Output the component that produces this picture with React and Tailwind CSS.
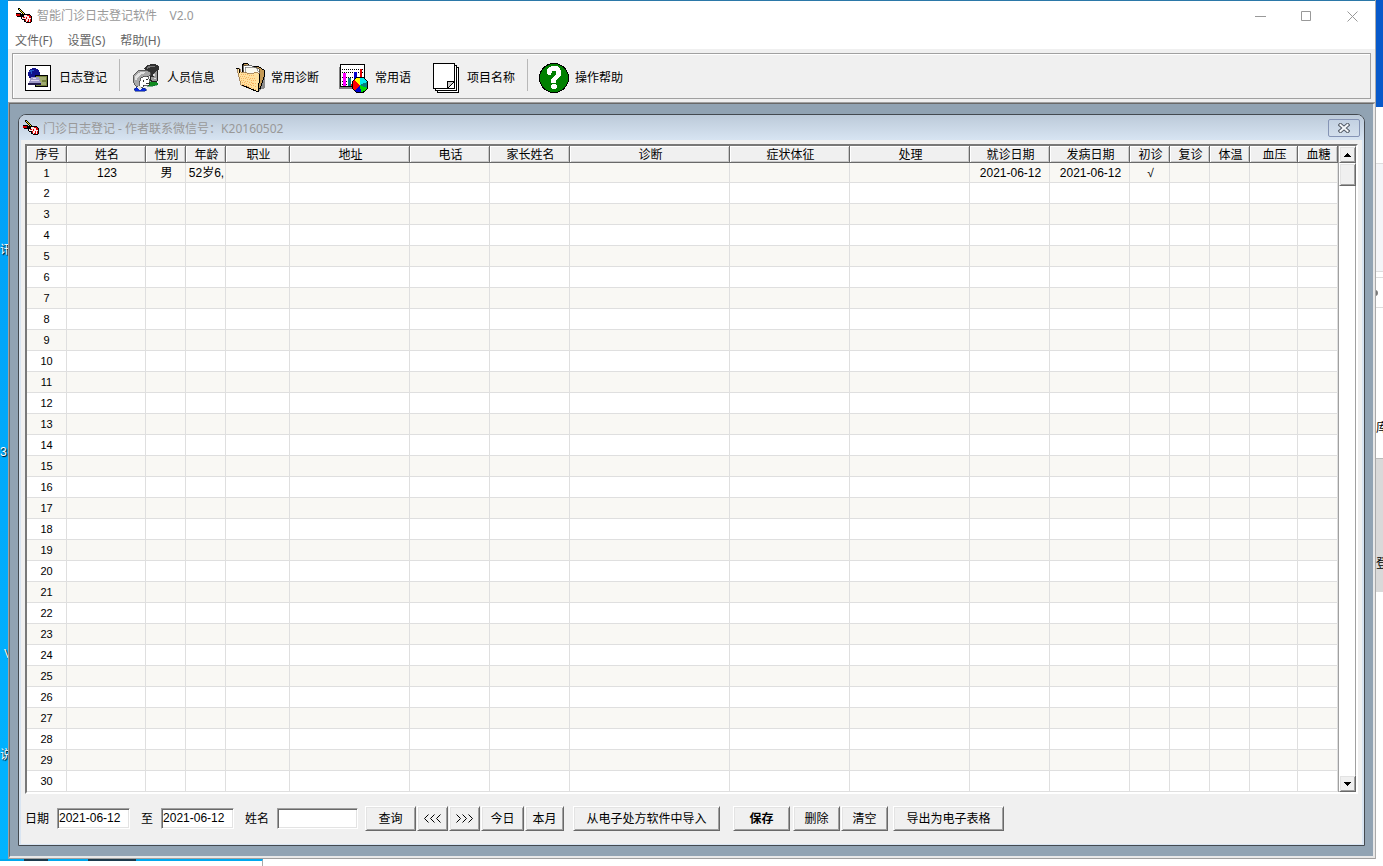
const COLUMNS = [
  { title: '序号', width: 40 },
  { title: '姓名', width: 79 },
  { title: '性别', width: 40 },
  { title: '年龄', width: 40 },
  { title: '职业', width: 64 },
  { title: '地址', width: 120 },
  { title: '电话', width: 80 },
  { title: '家长姓名', width: 80 },
  { title: '诊断', width: 160 },
  { title: '症状体征', width: 120 },
  { title: '处理', width: 120 },
  { title: '就诊日期', width: 80 },
  { title: '发病日期', width: 80 },
  { title: '初诊', width: 40 },
  { title: '复诊', width: 40 },
  { title: '体温', width: 40 },
  { title: '血压', width: 48 },
  { title: '血糖', width: 40 },
]

const RECORDS = [
  { 姓名: '123', 性别: '男', 年龄: '52岁6,', 就诊日期: '2021-06-12', 发病日期: '2021-06-12', 初诊: '√' },
]

const ROWS = Array.from({ length: 30 }, (_, i) => RECORDS[i] || {})

const RAISED =
  'border border-t-white border-l-white border-r-[#696969] border-b-[#696969] bg-[#f0f0f0] shadow-[inset_1px_1px_0_#e3e3e3,inset_-1px_-1px_0_#a0a0a0]'

function AppIcon() {
  return (
    <svg width="16" height="16" viewBox="0 0 16 16" shapeRendering="crispEdges" aria-hidden="true">
      <path d="M2 0h2v1h1v1h1v1h1v1h1v1h1v2h-2v-1h-1v-1h-1v-1h-1v-1h-1v-1h-1z" fill="#000" />
      <path d="M3 1h1v1h1v1h1v1h1v1h1v1h-1v-1h-1v-1h-1v-1h-1v-1h-1z" fill="#ffee20" />
      <path d="M0 5h5v1h3v2h-3v1h-4v-1h-1z" fill="#000" />
      <path d="M0 6h4v2h-4z" fill="#d00000" />
      <path d="M5 8h2v-1h2v-1h5v1h1v1h1v6h-1v1h-5v-1h-2v-2h-2v-1h-1z" fill="#000" />
      <path d="M6 9h2v-2h6v1h1v6h-5v-1h-1v-2h-3z" fill="#ffe9e9" />
      <path d="M7 9h2v1h-2zM11 7h3v1h-3zM13 8h2v2h-2zM10 9h1v2h-1zM12 11h1v2h-1zM9 11h1v2h-1zM14 11h1v3h-1zM11 13h2v1h-2z" fill="#d80000" />
    </svg>
  )
}

function LogIcon() {
  return (
    <svg width="32" height="32" viewBox="0 0 32 32" shapeRendering="crispEdges" aria-hidden="true">
      <path d="M2.5 4.5h25v25h-25z" fill="#fff" stroke="#000" />
      <circle cx="11" cy="13" r="6" fill="#10108c" />
      <path d="M7 9h4v1h-2v3h-1v-2h-2z" fill="#2458c8" />
      <path d="M12.500 14.500h12v11h-12z" fill="#76833c" stroke="#000" />
      <path d="M14 16h9v3h-4v2h4v3h-8z" fill="#a3ad72" />
      <path d="M8 16h8l2 6h-12z" fill="#a09ac8" />
      <path d="M8 19h8v1h-8zM10 17h3v1h-3z" fill="#e0d8f0" />
      <path d="M5 22h13v2h-13z" fill="#241c4c" />
    </svg>
  )
}

function PeopleIcon() {
  return (
    <svg width="32" height="32" viewBox="0 0 32 32" shapeRendering="crispEdges" aria-hidden="true">
      <path d="M15 23l2-3 4 1 3-1 3 3-1 1-4 1h-6z" fill="#118c20" stroke="#063" strokeWidth="0.500" />
      <path d="M19 9h7v5l1 3-1 1v2l-4 1-3-2z" fill="#9a9a9a" stroke="#222" />
      <path d="M13 8c2-4 7-5.500 11-5 4 1 5 4 4 6l-3 1-2 3v3h-3l-3-6z" fill="#303030" />
      <path d="M17 5h5l3 1h-5l-4 2z" fill="#777" />
      <path d="M22 13h2v2h-2zM23 17h2v1h-2z" fill="#ddd" />
      <path d="M2 17c1-6 6-8 10-8 5 0 8 2 8 5l-4 2-1 2-5 7-4 1c-3-2-4-5-4-9z" fill="#a8a8a8" stroke="#444" strokeWidth="0.800" />
      <path d="M4 16c2-4 5-5 8-5l3 1-5 1-4 4-1 5z" fill="#e2e2e2" />
      <path d="M10 17l4-2 3 1 2 4-1 1v3l-3 1-3-1v2l-4 1v-5z" fill="#fff" stroke="#222" strokeWidth="0.700" />
      <path d="M15 18h2v1h-2zM15 22h3v1h-3zM12 19h1v2h-1z" fill="#333" />
      <path d="M3 28l3-2 3 2 4-1 3 2-2 1h-10z" fill="#0928d8" stroke="#001c68" strokeWidth="0.500" />
      <path d="M7 25h3l1 3-2 1-3-2z" fill="#e8e8e8" />
    </svg>
  )
}

function FolderIcon() {
  return (
    <svg width="32" height="32" viewBox="0 0 32 32" shapeRendering="crispEdges" aria-hidden="true">
      <path d="M23 31l2-5 4-16 1 1v16l-5 2z" fill="#8a8a8a" />
      <path d="M7 4l3-2 3 1 1 2 10 1 5 3v7l-4 12-18-8z" fill="#c59a55" stroke="#000" />
      <path d="M8 5l6-1 10 4v12h-14z" fill="#fff" stroke="#333" strokeWidth="0.700" />
      <path d="M10 6l11 1 3 4v12h-13z" fill="#fbfaf0" stroke="#777" strokeWidth="0.700" />
      <path d="M2 7l3 1 1 3 11 2 3-2 5 2-2 18-17-7-2-8z" fill="#ffe2a0" stroke="#886030" strokeWidth="0.700" />
      <path d="M6 13l14 2M5 15l15 3M6 17l15 3M6 19l15 4M7 21l15 5M7 23l15 6" stroke="#f8b060" strokeDasharray="1 1" />
      <path d="M1 7l3 1 1 4M23 31l2-18M7 24l16 7" stroke="#000" fill="none" />
    </svg>
  )
}

function ChartIcon() {
  return (
    <svg width="32" height="32" viewBox="0 0 32 32" shapeRendering="crispEdges" aria-hidden="true">
      <path d="M0 6h24v22h-24z" fill="#808080" />
      <path d="M1.500 3.500h24v22h-24z" fill="#fff" stroke="#000" />
      <path d="M3 8.500h22M3 11.500h22M3 16.500h22M3 20.500h22M3 23.500h22" stroke="#000" strokeDasharray="1 1" />
      <path d="M4 12h3v13h-3z" fill="#f0f" />
      <path d="M9 17h3v8h-3z" fill="#008080" />
      <path d="M15 11h3v14h-3z" fill="#00c" />
      <path d="M21 8h2v17h-2z" fill="#e00000" />
      <circle cx="21" cy="24" r="8" fill="#00c" />
      <path d="M21 24L15 19L12 24L15 30z" fill="#f00" />
      <path d="M21 24L15 19L18 16.500L21 16z" fill="#ff0" />
      <path d="M21 24L21 16L26 18L28 21z" fill="#0ee" />
      <path d="M21 24L28 21L29 24L28 27z" fill="#008080" />
      <path d="M21 24L28 27L26 30L22 32z" fill="#0d0" />
      <circle cx="21" cy="24" r="8" fill="none" stroke="#000" />
    </svg>
  )
}

function PagesIcon() {
  return (
    <svg width="32" height="32" viewBox="0 0 32 32" shapeRendering="crispEdges" aria-hidden="true">
      <path d="M6.500 6.500h21v25h-21z" fill="#fff" stroke="#000" />
      <path d="M4.500 4.500h21v25h-21z" fill="#fff" stroke="#000" />
      <path d="M2.500 2.500h21v25h-21z" fill="#fff" stroke="#000" />
      <path d="M16.500 27.500v-7h7z" fill="#c8c8c8" stroke="#000" />
      <path d="M17 27l6-6v6z" fill="#fff" />
      <path d="M16.500 27.500l7-7" stroke="#000" />
    </svg>
  )
}

function HelpIcon() {
  return (
    <svg width="32" height="32" viewBox="0 0 32 32" shapeRendering="crispEdges" aria-hidden="true">
      <circle cx="15" cy="17" r="14.500" fill="#008000" stroke="#000" />
      <path d="M8 12v-3l2-3 3-1h5l3 2 1 3v4l-2 3-3 2v3h-5v-4l4-3 1-2v-2l-1-1h-3l-1 4h-3z" fill="#fff" />
      <path d="M13 23h3l2 1v3l-2 1h-3l-1-1v-3z" fill="#fff" />
    </svg>
  )
}

function ToolButton({ icon, children }) {
  return (
    <button type="button" className="flex shrink-0 items-center gap-1 px-2.5 whitespace-nowrap">
      {icon}
      <span className="pt-0.5">{children}</span>
    </button>
  )
}

function ToolSeparator() {
  return <div className="mr-px mb-1 ml-0.5 h-8 w-px shrink-0 bg-[#b8b8b8]" />
}

function TitleBar() {
  return (
    <header className="flex h-[30px] items-center pl-2 font-['Noto_Sans','Noto_Sans_CJK_SC',sans-serif] text-[#999]">
      <AppIcon />
      <h1 className="ml-[5px] flex-1 whitespace-pre">智能门诊日志登记软件{'    '}V2.0</h1>
      <button type="button" aria-label="最小化" className="flex h-full w-[46px] items-center justify-center">
        <svg width="11" height="11" viewBox="0 0 11 11" shapeRendering="crispEdges"><path d="M0 5.500h11" stroke="#999" /></svg>
      </button>
      <button type="button" aria-label="最大化" className="flex h-full w-[46px] items-center justify-center">
        <svg width="10" height="10" viewBox="0 0 10 10"><path d="M.5.500h9v9h-9z" fill="none" stroke="#999" /></svg>
      </button>
      <button type="button" aria-label="关闭" className="flex h-full w-[46px] items-center justify-center">
        <svg width="11" height="11" viewBox="0 0 11 11"><path d="M.5.500l10 10M10.500.500l-10 10" stroke="#999" /></svg>
      </button>
    </header>
  )
}

function MenuBar() {
  return (
    <nav className="flex h-[18px] items-center gap-[15px] pt-0.5 pl-[7px] font-['Noto_Sans','Noto_Sans_CJK_SC',sans-serif] text-[#666]">
      <button type="button">文件(F)</button>
      <button type="button">设置(S)</button>
      <button type="button">帮助(H)</button>
    </nav>
  )
}

function Toolbar() {
  return (
    <div className="bg-[#f0f0f0] px-1 pt-1 pb-[3px]">
      <div className="flex h-[46px] items-center border border-[#a0a0a0] pt-0.5 shadow-[inset_1px_1px_0_#fff]">
        <ToolButton icon={<LogIcon />}>日志登记</ToolButton>
        <ToolSeparator />
        <ToolButton icon={<PeopleIcon />}>人员信息</ToolButton>
        <ToolButton icon={<FolderIcon />}>常用诊断</ToolButton>
        <ToolButton icon={<ChartIcon />}>常用语</ToolButton>
        <ToolButton icon={<PagesIcon />}>项目名称</ToolButton>
        <ToolSeparator />
        <ToolButton icon={<HelpIcon />}>操作帮助</ToolButton>
      </div>
    </div>
  )
}

function LogTable() {
  return (
    <table className="w-full table-fixed border-separate border-spacing-0 text-center leading-4">
      <colgroup>
        {COLUMNS.map((col) => (
          <col key={col.title} style={{ width: col.width }} />
        ))}
      </colgroup>
      <thead>
        <tr className="h-[17px]">
          {COLUMNS.map((col) => (
            <th
              key={col.title}
              className="border-r border-b border-[#696969] bg-[#f0f0f0] p-0 pt-0.5 pl-0.5 leading-[14px] font-normal whitespace-nowrap shadow-[inset_1px_1px_0_#fff,inset_-1px_-1px_0_#c8c8c8]"
            >
              {col.title}
            </th>
          ))}
        </tr>
      </thead>
      <tbody>
        {ROWS.map((row, i) => (
          <tr key={i} className="h-[21px] first:h-5 odd:bg-[#f9f8f4] even:bg-white">
            <td className="border-r border-b border-[#dfdfdf] p-0 text-[11px]">{i + 1}</td>
            {COLUMNS.slice(1).map((col) => (
              <td key={col.title} className="border-r border-b border-[#dfdfdf] p-0 pl-0.5 whitespace-nowrap">
                {row[col.title]}
              </td>
            ))}
          </tr>
        ))}
      </tbody>
    </table>
  )
}

function ScrollBar() {
  return (
    <div className="flex w-[18px] shrink-0 flex-col border-l border-[#a0a0a0] bg-white">
      <button type="button" aria-label="向上滚动" className={`flex h-[17px] items-center justify-center ${RAISED}`}>
        <svg width="7" height="4" viewBox="0 0 7 4" shapeRendering="crispEdges"><path d="M0 4h7L3.500 0z" /></svg>
      </button>
      <div className="flex-1 border-r border-[#a0a0a0]">
        <div className={`-mr-px h-[23px] ${RAISED}`} />
      </div>
      <button type="button" aria-label="向下滚动" className={`flex h-[17px] items-center justify-center ${RAISED}`}>
        <svg width="7" height="4" viewBox="0 0 7 4" shapeRendering="crispEdges"><path d="M0 0h7L3.500 4z" /></svg>
      </button>
    </div>
  )
}

function Field({ id, label, value, className }) {
  return (
    <>
      <label htmlFor={id} className="shrink-0">{label}</label>
      <input
        id={id}
        type="text"
        defaultValue={value}
        className={`h-[21px] border border-t-[#a0a0a0] border-r-white border-b-white border-l-[#a0a0a0] bg-white px-px pb-0.5 shadow-[inset_1px_1px_0_#696969,inset_-1px_-1px_0_#e3e3e3] outline-none ${className}`}
      />
    </>
  )
}

function PushButton({ className, children }) {
  return (
    <button type="button" className={`h-[25px] shrink-0 whitespace-nowrap ${RAISED} ${className}`}>
      {children}
    </button>
  )
}

function Chevrons({ left }) {
  return (
    <svg width="17" height="9" viewBox="0 0 17 9" className={left ? 'mx-auto' : 'mx-auto rotate-180'} aria-hidden="true">
      <path d="M4.500.500l-4 4 4 4M10.500.500l-4 4 4 4M16.500.500l-4 4 4 4" fill="none" stroke="#000" />
    </svg>
  )
}

function QueryBar() {
  return (
    <form className="flex items-center pt-3" onSubmit={(e) => e.preventDefault()}>
      <Field id="from" label="日期" value="2021-06-12" className="mr-[11px] ml-2 w-[73px]" />
      <Field id="to" label="至" value="2021-06-12" className="mr-[11px] ml-2 w-[73px]" />
      <Field id="name" label="姓名" value="" className="mr-[7px] ml-2 w-[81px]" />
      <PushButton className="w-[51px]">查询</PushButton>
      <PushButton className="ml-px w-[31px]"><Chevrons left /></PushButton>
      <PushButton className="ml-px w-[31px]"><Chevrons /></PushButton>
      <PushButton className="ml-px w-[43px]">今日</PushButton>
      <PushButton className="ml-px w-[39px]">本月</PushButton>
      <PushButton className="ml-[9px] w-[147px]">从电子处方软件中导入</PushButton>
      <PushButton className="ml-[13px] w-[57px] font-bold">保存</PushButton>
      <PushButton className="ml-[3px] w-[47px]">删除</PushButton>
      <PushButton className="ml-px w-[47px]">清空</PushButton>
      <PushButton className="ml-[5px] w-[111px]">导出为电子表格</PushButton>
    </form>
  )
}

function LogWindow() {
  return (
    <section className="flex flex-1 flex-col overflow-hidden rounded-t-lg border border-[#444a50] bg-[#d9e5f2]">
      <div className="flex h-[25px] shrink-0 items-center bg-linear-to-b from-[#bccad9] to-[#d7e4f2] pr-1 pl-1 font-['Noto_Sans','Noto_Sans_CJK_SC',sans-serif] text-[#999]">
        <AppIcon />
        <h2 className="ml-1 flex-1 pt-0.5">门诊日志登记 - 作者联系微信号：K20160502</h2>
        <button
          type="button"
          aria-label="关闭"
          className="flex h-[18px] w-8 items-center justify-center rounded-xs border border-[#8594b5] bg-linear-to-b from-[#c3d1e2] to-[#d3dfec]"
        >
          <svg width="12" height="10" viewBox="0 0 12 10" className="shrink-0">
            <path d="M2.500 2l7 6M9.500 2l-7 6" stroke="#535b66" strokeWidth="4" strokeLinecap="square" />
            <path d="M2.500 2l7 6M9.500 2l-7 6" stroke="#f4f7fa" strokeWidth="2" strokeLinecap="square" />
          </svg>
        </button>
      </div>
      <div className="mx-0.5 mb-px flex-1 bg-[#f0f0f0] px-1 pt-1">
        <div className="flex border-2 border-t-[#787878] border-r-white border-b-white border-l-[#787878]">
          <div className="min-w-0 flex-1">
            <LogTable />
          </div>
          <ScrollBar />
        </div>
        <QueryBar />
      </div>
    </section>
  )
}

/* Slice of the desktop icons that shows left of the window */
function DesktopEdge() {
  return (
    <div className="relative w-2 shrink-0 overflow-hidden bg-linear-to-b from-[#009df5] to-[#00b4ff] text-white [text-shadow:1px_1px_1px_#000]">
      <span className="absolute top-[242px] left-0">讯</span>
      <span className="absolute top-[444px] left-0">3</span>
      <span className="absolute top-[646px] left-1">V</span>
      <span className="absolute top-[747px] left-0">说</span>
    </div>
  )
}

/* Slice of the other open windows on the right */
function BackgroundEdge() {
  return (
    <div className="relative w-2 shrink-0 overflow-hidden border-l border-[#aaa] bg-white">
      <div className="h-[107px] bg-[#0759ca]" />
      <div className="h-[57px] border-b border-[#ddd]" />
      <div className="h-[108px] border-b border-[#ddd] bg-[#f4f5f8]" />
      <div className="mt-[5px] h-[31px] border-y border-[#ddd]" />
      <div className="mt-[150px] h-[134px] border-t border-[#bbb] bg-[#d9d9d9]" />
      <span className="absolute top-[290px] -left-1.5 h-1.5 w-2 rounded-full bg-[#777]" />
      <span className="absolute top-[420px] left-0">库</span>
      <span className="absolute top-[556px] left-0">登</span>
    </div>
  )
}

export default function App() {
  return (
    <div className="flex min-h-screen flex-col bg-white font-['Liberation_Sans','Noto_Sans_CJK_SC',sans-serif] text-xs text-black">
      <div className="flex flex-1">
        <DesktopEdge />
        <main className="flex min-w-0 flex-1 flex-col border-t border-[#2b78a8] bg-white">
          <TitleBar />
          <MenuBar />
          <Toolbar />
          <div className="flex flex-1 border-t border-b border-l border-[#a0a0a0]">
            <div className="flex min-w-0 flex-1 border-t border-r-2 border-b-2 border-l border-t-[#696969] border-r-[#e8e8e8] border-b-[#e8e8e8] border-l-[#696969] bg-[#91a3b3] px-2 py-2.5">
              <LogWindow />
            </div>
          </div>
        </main>
        <BackgroundEdge />
      </div>
      <div className="h-[7px]">
        <div className="flex h-full w-[263px] gap-10 border-t-2 border-r border-t-[#00a8ee] border-r-[#aaa] pl-6">
          <div className="-mt-0.5 h-0.5 w-6 bg-[#1d3a4c]" />
          <div className="-mt-0.5 h-0.5 w-12 bg-[#1d3a4c]" />
        </div>
      </div>
    </div>
  )
}
